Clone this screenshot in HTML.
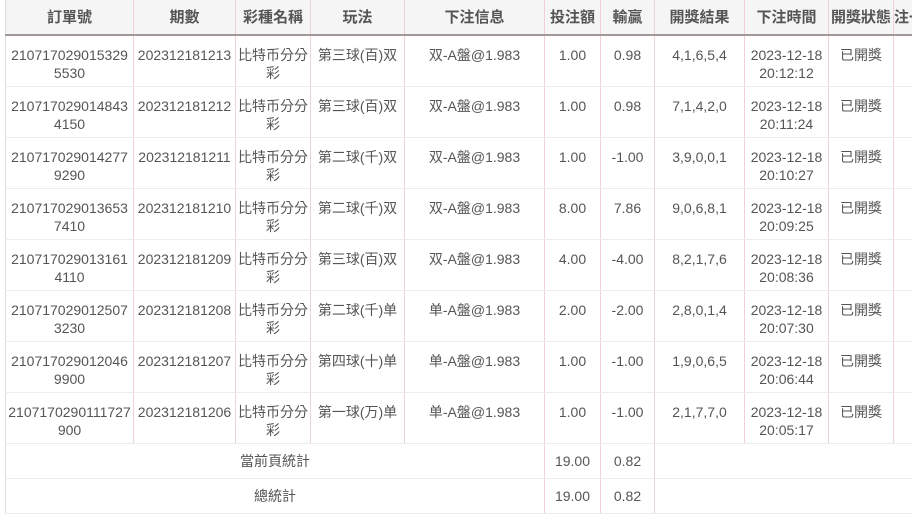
<!DOCTYPE html>
<html><head><meta charset="utf-8"><style>
html,body{margin:0;padding:0;background:#fff;width:912px;height:517px;overflow:hidden}
table{position:absolute;left:5px;top:0;border-collapse:collapse;table-layout:fixed;width:970px;font-family:"Liberation Sans","Noto Sans CJK TC",sans-serif;font-size:14px;color:#555;border-left:1px solid #ddd;border-bottom:1px solid #d5d5d5}
th{background:#f5f5f5;height:35px;font-weight:bold;font-size:15px;color:#555;border-right:1px solid #f1d2d4;border-bottom:2px solid #a39898;text-align:center;padding:0;white-space:nowrap;overflow:hidden;vertical-align:top;padding-top:6px;box-sizing:border-box}
td{height:51px;border-right:1px solid #f1d2d4;border-bottom:1px solid #ececec;text-align:center;vertical-align:top;padding:10px 0 0;line-height:18px;box-sizing:border-box;word-break:break-all}
tr.s td{height:35px;vertical-align:middle;padding:0}
</style></head><body>
<table>
<colgroup><col style="width:128px"><col style="width:102px"><col style="width:75px"><col style="width:94px"><col style="width:140px"><col style="width:56px"><col style="width:54px"><col style="width:90px"><col style="width:84px"><col style="width:65px"><col style="width:82px"></colgroup>
<tr><th>訂單號</th><th>期數</th><th>彩種名稱</th><th>玩法</th><th>下注信息</th><th>投注額</th><th>輸贏</th><th>開獎結果</th><th>下注時間</th><th>開獎狀態</th><th style="text-align:left">注一</th></tr>
<tr><td>210717029015329<br>5530</td><td>202312181213</td><td>比特币分分彩</td><td>第三球(百)双</td><td>双-A盤@1.983</td><td>1.00</td><td>0.98</td><td>4,1,6,5,4</td><td>2023-12-18 20:12:12</td><td>已開獎</td><td></td></tr>
<tr><td>210717029014843<br>4150</td><td>202312181212</td><td>比特币分分彩</td><td>第三球(百)双</td><td>双-A盤@1.983</td><td>1.00</td><td>0.98</td><td>7,1,4,2,0</td><td>2023-12-18 20:11:24</td><td>已開獎</td><td></td></tr>
<tr><td>210717029014277<br>9290</td><td>202312181211</td><td>比特币分分彩</td><td>第二球(千)双</td><td>双-A盤@1.983</td><td>1.00</td><td>-1.00</td><td>3,9,0,0,1</td><td>2023-12-18 20:10:27</td><td>已開獎</td><td></td></tr>
<tr><td>210717029013653<br>7410</td><td>202312181210</td><td>比特币分分彩</td><td>第二球(千)双</td><td>双-A盤@1.983</td><td>8.00</td><td>7.86</td><td>9,0,6,8,1</td><td>2023-12-18 20:09:25</td><td>已開獎</td><td></td></tr>
<tr><td>210717029013161<br>4110</td><td>202312181209</td><td>比特币分分彩</td><td>第三球(百)双</td><td>双-A盤@1.983</td><td>4.00</td><td>-4.00</td><td>8,2,1,7,6</td><td>2023-12-18 20:08:36</td><td>已開獎</td><td></td></tr>
<tr><td>210717029012507<br>3230</td><td>202312181208</td><td>比特币分分彩</td><td>第二球(千)单</td><td>单-A盤@1.983</td><td>2.00</td><td>-2.00</td><td>2,8,0,1,4</td><td>2023-12-18 20:07:30</td><td>已開獎</td><td></td></tr>
<tr><td>210717029012046<br>9900</td><td>202312181207</td><td>比特币分分彩</td><td>第四球(十)单</td><td>单-A盤@1.983</td><td>1.00</td><td>-1.00</td><td>1,9,0,6,5</td><td>2023-12-18 20:06:44</td><td>已開獎</td><td></td></tr>
<tr><td>2107170290111727<br>900</td><td>202312181206</td><td>比特币分分彩</td><td>第一球(万)单</td><td>单-A盤@1.983</td><td>1.00</td><td>-1.00</td><td>2,1,7,7,0</td><td>2023-12-18 20:05:17</td><td>已開獎</td><td></td></tr>
<tr class="s"><td colspan="5">當前頁統計</td><td>19.00</td><td>0.82</td><td colspan="4" style="border-right:none"></td></tr>
<tr class="s"><td colspan="5">總統計</td><td>19.00</td><td>0.82</td><td colspan="4" style="border-right:none"></td></tr>
</table>
</body></html>
